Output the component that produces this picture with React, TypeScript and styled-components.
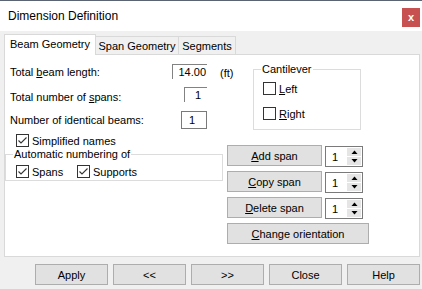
import React from "react";
import styled, { createGlobalStyle } from "styled-components";

const Global = createGlobalStyle`
  html, body { margin: 0; padding: 0; background: #f0f0f0; }
  body {
    font-family: "Liberation Sans", Arial, sans-serif;
    font-size: 11px;
    color: #000;
  }
  * { box-sizing: border-box; }
`;

const Window = styled.div`
  width: 422px;
  height: 289px;
  display: flex;
  flex-direction: column;
  background: #f0f0f0;
  overflow: hidden;
`;

const TopEdge = styled.div`
  height: 1px;
  background: #5b6472;
`;

const TitleBar = styled.div`
  height: 30px;
  background: #fff;
  display: flex;
  align-items: center;
  justify-content: space-between;
  padding: 0 2px 0 8px;
`;

const Title = styled.div`
  font-size: 12px;
  line-height: 14px;
`;

const CloseBtn = styled.div`
  align-self: flex-start;
  margin-top: 7px;
  width: 18px;
  height: 19px;
  background: #c75050;
  color: #fff;
  font-weight: bold;
  font-size: 11px;
  display: flex;
  align-items: center;
  justify-content: center;
  line-height: 1;
`;

const Body = styled.div`
  flex: 1;
  display: flex;
  flex-direction: column;
  padding: 3px 2px 0 4px;
`;

const TabRow = styled.div`
  display: flex;
  align-items: flex-end;
  height: 20px;
`;

const Tab = styled.div<{ $active?: boolean; $w: number }>`
  position: relative;
  z-index: ${(p) => (p.$active ? 2 : 1)};
  width: ${(p) => p.$w}px;
  height: ${(p) => (p.$active ? 21 : 18)}px;
  margin-bottom: ${(p) => (p.$active ? -1 : 0)}px;
  margin-left: ${(p) => (p.$active ? 0 : -1)}px;
  background: ${(p) => (p.$active ? "#fff" : "#f0f0f0")};
  border: 1px solid #d9d9d9;
  border-bottom: none;
  display: flex;
  align-items: center;
  justify-content: center;
  padding-bottom: ${(p) => (p.$active ? 2 : 0)}px;
  white-space: nowrap;
`;

const Panel = styled.div`
  height: 203px;
  background: #fff;
  border: 1px solid #d9d9d9;
  display: flex;
  flex-direction: column;
`;

const TopSection = styled.div`
  display: flex;
  align-items: flex-start;
  height: 75px;
  padding: 9px 0 0 5px;
`;

const Fields = styled.div`
  width: 197px;
  display: flex;
  flex-direction: column;
`;

const FieldRow = styled.div<{ $h: number; $mt: number }>`
  height: ${(p) => p.$h}px;
  margin-top: ${(p) => p.$mt}px;
  display: flex;
  align-items: center;
  justify-content: space-between;
  white-space: nowrap;
`;

const U = styled.span`
  text-decoration: underline;
  text-underline-offset: 1px;
`;

const SunkenInput = styled.div<{ $w: number; $pr: number }>`
  align-self: flex-start;
  width: ${(p) => p.$w}px;
  height: 15px;
  border-top: 1px solid #828282;
  border-left: 1px solid #828282;
  background: #fff;
  display: flex;
  align-items: center;
  justify-content: flex-end;
  padding-right: ${(p) => p.$pr}px;
`;

const BoxInput = styled.div`
  width: 26px;
  height: 18px;
  border: 1px solid #7a7a7a;
  background: #fff;
  display: flex;
  align-items: center;
  padding-left: 7px;
`;

const Unit = styled.div`
  width: 33px;
  margin: 2px 0 0 13px;
  line-height: 15px;
`;

const Group = styled.div<{ $w: number; $h: number; $mt?: number }>`
  position: relative;
  width: ${(p) => p.$w}px;
  height: ${(p) => p.$h}px;
  margin-top: ${(p) => p.$mt ?? 0}px;
  border: 1px solid #dcdcdc;
`;

const Legend = styled.span`
  position: absolute;
  top: -7px;
  left: 7px;
  padding: 0 1px;
  line-height: 13px;
  background: #fff;
  white-space: nowrap;
`;

const CantileverBody = styled.div`
  display: flex;
  flex-direction: column;
  gap: 12px;
  padding: 12px 0 0 9px;
`;

const CheckRow = styled.label<{ $w?: number }>`
  display: flex;
  align-items: center;
  gap: 3px;
  height: 13px;
  width: ${(p) => (p.$w ? `${p.$w}px` : "auto")};
  white-space: nowrap;
`;

const Box = styled.span`
  width: 13px;
  height: 13px;
  flex: none;
  border: 1px solid #333;
  background: #fff;
  display: flex;
`;

const Check = ({ checked, children, w }: { checked?: boolean; children: React.ReactNode; w?: number }) => (
  <CheckRow $w={w}>
    <Box>
      {checked && (
        <svg width="11" height="11" viewBox="0 0 11 11">
          <polyline points="1.5,5.5 4,8 9.5,2.5" fill="none" stroke="#333" strokeWidth="1.1" />
        </svg>
      )}
    </Box>
    <span>{children}</span>
  </CheckRow>
);

const BottomSection = styled.div`
  display: flex;
  align-items: flex-start;
`;

const LeftCol = styled.div`
  width: 218px;
  display: flex;
  flex-direction: column;
  padding-top: 4px;
`;

const Indent = styled.div`
  padding-left: 11px;
`;

const AutoBody = styled.div`
  display: grid;
  grid-template-columns: 61px auto;
  padding: 10px 0 0 10px;
`;

const RightCol = styled.div`
  margin: 15px 0 0 4px;
  display: flex;
  flex-direction: column;
  gap: 5px;
`;

const ActionRow = styled.div`
  display: flex;
  align-items: flex-start;
  gap: 3px;
  height: 21px;
`;

const Button = styled.div<{ $w: number }>`
  width: ${(p) => p.$w}px;
  height: 21px;
  background: #e1e1e1;
  border: 1px solid #adadad;
  display: flex;
  align-items: center;
  justify-content: center;
  white-space: nowrap;
`;

const Spinner = styled.div`
  margin-top: 1px;
  width: 38px;
  height: 21px;
  border: 1px solid #7a7a7a;
  background: #fff;
  display: flex;
`;

const SpinValue = styled.div`
  flex: 1;
  display: flex;
  align-items: center;
  padding-left: 6px;
`;

const SpinArrows = styled.div`
  width: 15px;
  display: flex;
  flex-direction: column;
  gap: 1px;
  padding: 1px 1px 1px 0;
`;

const SpinArrow = styled.div`
  flex: 1;
  background: #e5e5e5;
  display: flex;
  align-items: center;
  justify-content: center;
`;

const Tri = ({ up }: { up?: boolean }) => (
  <svg width="7" height="4" viewBox="0 0 7 4">
    <polygon points={up ? "0.5,4 3.5,0.5 6.5,4" : "0.5,0 3.5,3.5 6.5,0"} fill="#000" />
  </svg>
);

const Spin = () => (
  <Spinner>
    <SpinValue>1</SpinValue>
    <SpinArrows>
      <SpinArrow>
        <Tri up />
      </SpinArrow>
      <SpinArrow>
        <Tri />
      </SpinArrow>
    </SpinArrows>
  </Spinner>
);

const Footer = styled.div`
  display: flex;
  justify-content: flex-end;
  gap: 5px;
  padding-top: 7px;
`;

export default function App() {
  return (
    <Window>
      <Global />
      <TopEdge />
      <TitleBar>
        <Title>Dimension Definition</Title>
        <CloseBtn>x</CloseBtn>
      </TitleBar>
      <Body>
        <TabRow>
          <Tab $active $w={92}>Beam Geometry</Tab>
          <Tab $w={84}>Span Geometry</Tab>
          <Tab $w={58}>Segments</Tab>
        </TabRow>
        <Panel>
          <TopSection>
            <Fields>
              <FieldRow $h={15} $mt={0}>
                <span>
                  Total <U>b</U>eam length:
                </span>
                <SunkenInput $w={35} $pr={1}>14.00</SunkenInput>
              </FieldRow>
              <FieldRow $h={20} $mt={8}>
                <span>
                  Total number of <U>s</U>pans:
                </span>
                <SunkenInput $w={23} $pr={6}>1</SunkenInput>
              </FieldRow>
              <FieldRow $h={18} $mt={4}>
                <span>Number of identical beams:</span>
                <BoxInput>1</BoxInput>
              </FieldRow>
            </Fields>
            <Unit>(ft)</Unit>
            <Group $w={108} $h={61} $mt={5}>
              <Legend>Cantilever</Legend>
              <CantileverBody>
                <Check>
                  <U>L</U>eft
                </Check>
                <Check>
                  <U>R</U>ight
                </Check>
              </CantileverBody>
            </Group>
          </TopSection>
          <BottomSection>
            <LeftCol>
              <Indent>
                <Check checked>Simplified names</Check>
              </Indent>
              <Group $w={218} $h={27} $mt={7}>
                <Legend>Automatic numbering of</Legend>
                <AutoBody>
                  <Check checked w={61}>Spans</Check>
                  <Check checked>Supports</Check>
                </AutoBody>
              </Group>
            </LeftCol>
            <RightCol>
              <ActionRow>
                <Button $w={95}>
                  <U>A</U>dd span
                </Button>
                <Spin />
              </ActionRow>
              <ActionRow>
                <Button $w={95}>
                  <U>C</U>opy span
                </Button>
                <Spin />
              </ActionRow>
              <ActionRow>
                <Button $w={95}>
                  <U>D</U>elete span
                </Button>
                <Spin />
              </ActionRow>
              <ActionRow>
                <Button $w={142}>
                  <U>C</U>hange orientation
                </Button>
              </ActionRow>
            </RightCol>
          </BottomSection>
        </Panel>
        <Footer>
          <Button $w={73}>Apply</Button>
          <Button $w={73}>&lt;&lt;</Button>
          <Button $w={73}>&gt;&gt;</Button>
          <Button $w={73}>Close</Button>
          <Button $w={73}>Help</Button>
        </Footer>
      </Body>
    </Window>
  );
}
